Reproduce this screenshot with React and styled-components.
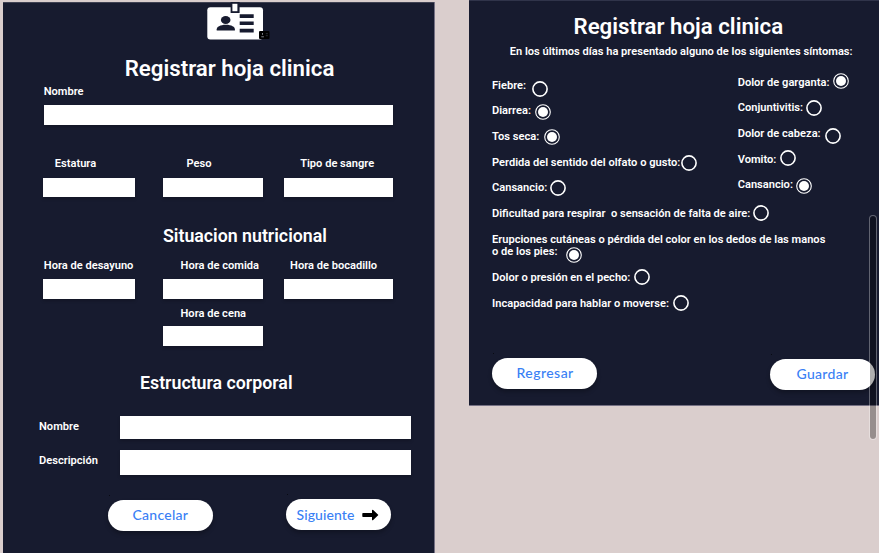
import React from 'react';
import styled, { createGlobalStyle, css } from 'styled-components';

const GlobalStyle = createGlobalStyle`
  * { box-sizing: border-box; }
  body { margin: 0; background: #dacecd; overflow: hidden; }
`;

const Page = styled.main`
  position: relative;
  display: flex;
  align-items: flex-start;
  width: 879px;
  height: 553px;
  overflow: hidden;
  background: #dacecd;
  color: #fff;
  font-family: Roboto, 'Liberation Sans', sans-serif;
`;

const Panel = styled.section`
  flex: none;
  background: #171b2f;
`;

const RecordPanel = styled(Panel)`
  width: 432px;
  height: 551px;
  margin: 2px 34px 0 3px;
  box-shadow: inset -1px 0 0 #747083, inset 0 1px 0 #3f4152;
`;

const SymptomPanel = styled(Panel)`
  width: 410px;
  height: 406px;
  border-top: 1px solid #30344a;
  border-bottom: 1px solid #747083;
`;

const Badge = styled.svg`
  display: block;
  width: 66px;
  height: 38px;
  margin-left: 203px;
`;

const heading = css`
  margin: 0;
  font-weight: 600;
  white-space: nowrap;
`;

const Title = styled.h1`
  ${heading}
  font-size: 22.25px;
  line-height: 26px;
  padding: ${(p) => p.$top}px 0 0 ${(p) => p.$left}px;
`;

const Subtitle = styled.h2`
  ${heading}
  font-size: 17.75px;
  line-height: 22px;
  padding: ${(p) => p.$top}px 0 0 ${(p) => p.$left}px;
`;

const Label = styled.label`
  display: block;
  flex: none;
  width: ${(p) => (p.$width ? `${p.$width}px` : 'auto')};
  margin-left: ${(p) => p.$indent || 0}px;
  margin-top: ${(p) => p.$drop || 0}px;
  margin-bottom: -0.8px;
  padding-top: 0.8px;
  font-size: 11.1px;
  font-weight: 600;
  line-height: 14px;
  white-space: pre;
`;

const Input = styled.input`
  display: block;
  width: 100%;
  height: ${(p) => p.$height || 19.5}px;
  margin: ${(p) => p.$gap || 0}px 0 0;
  padding: 0 6px;
  border: 0;
  border-radius: 0;
  background: #fff;
  box-shadow: 0 2px 3px rgba(0, 0, 0, 0.2);
  font: 500 11px Roboto, sans-serif;
`;

const FieldGrid = styled.div`
  display: grid;
  grid-template-columns: 92.2px 99.5px 109.5px;
  column-gap: 27.6px;
  justify-content: start;
  padding: ${(p) => p.$top}px 0 0 40.3px;

  & > :nth-child(3) { margin-left: -6.3px; margin-right: 6.3px; }
`;

const Field = styled.div`
  width: ${(p) => (p.$width ? `${p.$width}px` : 'auto')};
  margin: ${(p) => p.$top || 0}px 0 0 ${(p) => p.$left || 0}px;
`;

const InlineField = styled.div`
  display: grid;
  grid-template-columns: 81px 290.5px;
  align-items: start;
  padding: ${(p) => p.$top}px 0 0 36px;
`;

const Actions = styled.div`
  display: flex;
  align-items: flex-start;
  gap: ${(p) => p.$gap}px;
  padding: ${(p) => p.$top}px 0 0 ${(p) => p.$left}px;
`;

const Button = styled.button`
  position: relative;
  display: flex;
  align-items: center;
  justify-content: flex-start;
  gap: 7px;
  flex: none;
  width: 105px;
  height: 31px;
  margin: ${(p) => p.$drop || 0}px 0 0;
  padding: 0 0 ${(p) => p.$lift || 0}px ${(p) => p.$inset}px;
  border: 0;
  border-radius: 16px;
  background: #fff;
  box-shadow: 0 3px 4px rgba(0, 0, 0, 0.25);
  color: #3980f5;
  font: 500 14px/18px Lato, sans-serif;
  letter-spacing: ${(p) => p.$track || 0}px;
  white-space: nowrap;

  &::before {
    content: '';
    position: absolute;
    left: 1px;
    top: -5px;
    width: 1px;
    height: 1px;
    background: #080a12;
  }
`;

const Arrow = styled.svg`
  width: 17px;
  height: 12px;
  flex: none;
  margin-top: 1px;
`;

const SymptomArea = styled.div`
  display: grid;
  grid-template-columns: 245.7px 1fr;
  height: 299px;
  padding-left: 23px;
`;

const SymptomColumn = styled.div`
  display: flex;
  flex-direction: column;
  padding-top: ${(p) => p.$top}px;
`;

const SymptomRow = styled.div`
  display: flex;
  align-items: flex-start;
  flex: none;
  height: ${(p) => p.$height || 25.65}px;
`;

const SymptomLabel = styled(Label)`
  line-height: 12.8px;
`;

const Radio = styled.svg`
  flex: none;
  width: 16px;
  height: 16px;
  margin-top: ${(p) => p.$drop}px;
  fill: none;
  stroke: #fff;
`;

const ScrollThumb = styled.div`
  position: absolute;
  left: 869px;
  top: 215px;
  width: 8px;
  height: 224.5px;
  border: 1px solid rgba(255, 255, 255, 0.32);
  border-radius: 4px;
  background: rgba(0, 0, 0, 0.31);
  background-clip: padding-box;
`;

const leftSymptoms = [
  { text: 'Fiebre:', width: 39.5, drop: 2.1 },
  { text: 'Diarrea:', width: 43.2, on: true, drop: -0.9 },
  { text: 'Tos seca:', width: 51.6, on: true, drop: -1.1 },
  { text: 'Perdida del sentido del olfato o gusto:', width: 189, drop: -1.1 },
  { text: 'Cansancio:', width: 58.2, drop: -1.1 },
  { text: 'Dificultad para respirar  o sensación de falta de aire:', width: 260.7, drop: -2.4 },
  {
    text: 'Erupciones cutáneas o pérdida del color en los dedos de las manos\no de los pies:',
    width: 73.6,
    on: true,
    drop: 13.9,
    height: 38.4,
  },
  { text: 'Dolor o presión en el pecho:', width: 142.2, drop: -2 },
  { text: 'Incapacidad para hablar o moverse:', width: 181, drop: -2 },
];

const rightSymptoms = [
  { text: 'Dolor de garganta:', width: 95.8, on: true, drop: -3.2 },
  { text: 'Conjuntivitis:', width: 68.8, drop: -1.6 },
  { text: 'Dolor de cabeza:', width: 87.8, drop: 1.2 },
  { text: 'Vomito:', width: 42.8, drop: -3.1 },
  { text: 'Cansancio:', width: 58.1, on: true, drop: -0.9 },
];

function Symptoms({ items }) {
  return items.map((s) => (
    <SymptomRow key={s.text} $height={s.height}>
      <SymptomLabel $width={s.width}>{s.text}</SymptomLabel>
      <Radio viewBox="0 0 16 16" role="radio" aria-checked={!!s.on} $drop={s.drop}>
        <circle cx="8" cy="8" r={s.on ? 7.3 : 7.1} strokeWidth={s.on ? 1.1 : 1.6} />
        {s.on && <circle cx="8" cy="8" r="5" fill="#fff" stroke="none" />}
      </Radio>
    </SymptomRow>
  ));
}

export default function App() {
  return (
    <>
      <GlobalStyle />
      <Page>
        <RecordPanel>
          <Badge viewBox="206 2 66 38" aria-hidden="true">
            <rect x="207.3" y="7.2" width="55.7" height="32.4" rx="3" fill="#fff" />
            <rect x="230.6" y="2" width="9" height="11" fill="#171b2f" />
            <rect x="232.4" y="3.8" width="5" height="7.4" fill="#fff" />
            <ellipse cx="225.7" cy="20" rx="4.8" ry="4" fill="#171b2f" />
            <path d="M216.7 30.5v-1.2c0-2.4 3.4-4.6 9.2-4.6s9 2.2 9 4.6v1.2z" fill="#171b2f" />
            <path d="M239.7 14.3h14v3.6h-14zM239.7 21.5h14v3.6h-14zM239.7 28.8h14v3.6h-14z" fill="#171b2f" />
            <rect x="259" y="31" width="10.5" height="8" rx="1" fill="#000" />
            <path d="M262.5 33v1.8M261.3 36.8h2.6" stroke="#8a8d96" strokeWidth=".9" />
            <path d="M265.8 33.7h2M265.8 35.7h2" stroke="#30323c" strokeWidth=".9" />
          </Badge>
          <Title $top={15} $left={121.7}>Registrar hoja clinica</Title>
          <Field $top={3.3} $left={40.7} $width={349.7}>
            <Label>Nombre</Label>
            <Input $gap={7} aria-label="Nombre" />
          </Field>
          <FieldGrid $top={31}>
            <Field><Label $indent={11.5}>Estatura</Label><Input $gap={8} /></Field>
            <Field><Label $indent={23.4}>Peso</Label><Input $gap={8} /></Field>
            <Field><Label $indent={16.3}>Tipo de sangre</Label><Input $gap={8} /></Field>
          </FieldGrid>
          <Subtitle $top={28} $left={160}>Situacion nutricional</Subtitle>
          <FieldGrid $top={10.8}>
            <Field><Label $indent={0.5}>Hora de desayuno</Label><Input $gap={7.3} /></Field>
            <Field><Label $indent={17.5} $drop={0.5}>Hora de comida</Label><Input $gap={6.8} /></Field>
            <Field><Label $indent={6.2}>Hora de bocadillo</Label><Input $gap={7} /></Field>
          </FieldGrid>
          <Field $top={7.5} $left={160} $width={99.5}>
            <Label $indent={17.5}>Hora de cena</Label>
            <Input $gap={5.7} />
          </Field>
          <Subtitle $top={26.2} $left={137}>Estructura corporal</Subtitle>
          <InlineField $top={22.6}>
            <Label $drop={2.7}>Nombre</Label>
            <Input $height={22.3} />
          </InlineField>
          <InlineField $top={11.6}>
            <Label $drop={3.3}>Descripción</Label>
            <Input $height={24.4} />
          </InlineField>
          <Actions $top={24.5} $left={105} $gap={73}>
            <Button $inset={24.5} $drop={1.3} $track={0.25} $lift={2}>Cancelar</Button>
            <Button $inset={10.5} $track={0.1}>
              Siguiente
              <Arrow viewBox="0 0 17 12" aria-hidden="true">
                <path d="M1 4h9V1.2q.4-.9 1.2-.2L16.4 6l-5.2 5q-.8.7-1.2-.2V8H1Q.3 8 .3 7.3V4.7Q.3 4 1 4z" />
              </Arrow>
            </Button>
          </Actions>
        </RecordPanel>

        <SymptomPanel>
          <Title $top={11.7} $left={104.5}>Registrar hoja clinica</Title>
          <Label $indent={40.7} $drop={5.3}>
            En los últimos días ha presentado alguno de los siguientes síntomas:
          </Label>
          <SymptomArea>
            <SymptomColumn $top={21}><Symptoms items={leftSymptoms} /></SymptomColumn>
            <SymptomColumn $top={18}><Symptoms items={rightSymptoms} /></SymptomColumn>
          </SymptomArea>
          <Actions $top={0.6} $left={23} $gap={172.5}>
            <Button $inset={24.5} $track={0.45} $lift={1}>Regresar</Button>
            <Button $inset={27} $drop={1} $track={0.3}>Guardar</Button>
          </Actions>
        </SymptomPanel>
        <ScrollThumb />
      </Page>
    </>
  );
}
